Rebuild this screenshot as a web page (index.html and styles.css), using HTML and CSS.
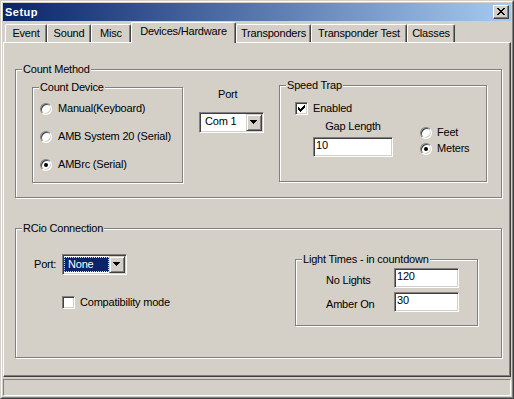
FILE: index.html
```html
<!DOCTYPE html>
<html lang="en">
<head>
    <meta charset="UTF-8">
    <title>Setup</title>
    <link rel="stylesheet" href="styles.css">
</head>
<body>
<div class="window">
    <div class="frame">
        <div class="titlebar">
            <span class="title">Setup</span>
            <div class="close-btn">
                <svg width="16" height="14" viewBox="0 0 16 14" shape-rendering="crispEdges">
                    <path d="M4 3h2v1h-2z M10 3h2v1h-2z M5 4h2v1h-2z M9 4h2v1h-2z M6 5h4v1h-4z M7 6h2v1h-2z M6 7h4v1h-4z M5 8h2v1h-2z M9 8h2v1h-2z M4 9h2v1h-2z M10 9h2v1h-2z" fill="#000"/>
                </svg>
            </div>
        </div>

        <div class="tabs">
            <div class="tab tab-event">Event</div>
            <div class="tab tab-sound">Sound</div>
            <div class="tab tab-misc">Misc</div>
            <div class="tab tab-devices active">Devices/Hardware</div>
            <div class="tab tab-transponders">Transponders</div>
            <div class="tab tab-test">Transponder Test</div>
            <div class="tab tab-classes">Classes</div>
        </div>

        <div class="panel">
            <!-- count method -->
            <div class="group count-method">
                <span class="group-title">Count Method</span>

                <div class="group count-device">
                    <span class="group-title">Count Device</span>
                    <div class="option"><span class="radio"></span>Manual(Keyboard)</div>
                    <div class="option"><span class="radio"></span>AMB System 20 (Serial)</div>
                    <div class="option"><span class="radio on"></span>AMBrc (Serial)</div>
                </div>

                <div class="port-col">
                    <div class="port-label">Port</div>
                    <div class="combo">
                        <div class="combo-value">Com 1</div>
                        <div class="combo-btn">
                            <svg width="8" height="5" viewBox="0 0 8 5" shape-rendering="crispEdges"><path d="M0 0h7v1h-1v1h-1v1h-1v1h-1v-1h-1v-1h-1v-1h-1z" fill="#000"/></svg>
                        </div>
                    </div>
                </div>

                <div class="group speed-trap">
                    <span class="group-title">Speed Trap</span>
                    <div class="option">
                        <span class="check">
                            <svg width="7" height="7" viewBox="0 0 7 7" shape-rendering="crispEdges"><path d="M0 2h1v3h-1z M1 3h1v3h-1z M2 4h1v3h-1z M3 3h1v3h-1z M4 2h1v3h-1z M5 1h1v3h-1z M6 0h1v3h-1z" fill="#000"/></svg>
                        </span>Enabled
                    </div>
                    <div class="gap-row">
                        <div class="gap-col">
                            <div class="gap-label">Gap Length</div>
                            <div class="field gap-field">10</div>
                        </div>
                        <div class="unit-col">
                            <div class="option"><span class="radio"></span>Feet</div>
                            <div class="option"><span class="radio on"></span>Meters</div>
                        </div>
                    </div>
                </div>
            </div>

            <!-- rcio -->
            <div class="group rcio">
                <span class="group-title">RCio Connection</span>

                <div class="rcio-left">
                    <div class="port-row">
                        <span class="port-row-label">Port:</span>
                        <div class="combo">
                            <div class="combo-value selected">None</div>
                            <div class="combo-btn">
                                <svg width="8" height="5" viewBox="0 0 8 5" shape-rendering="crispEdges"><path d="M0 0h7v1h-1v1h-1v1h-1v1h-1v-1h-1v-1h-1v-1h-1z" fill="#000"/></svg>
                            </div>
                        </div>
                    </div>
                    <div class="option compat"><span class="check"></span>Compatibility mode</div>
                </div>

                <div class="group light-times">
                    <span class="group-title">Light Times - in countdown</span>
                    <div class="light-row">
                        <span class="light-label">No Lights</span>
                        <div class="field light-field">120</div>
                    </div>
                    <div class="light-row">
                        <span class="light-label">Amber On</span>
                        <div class="field light-field">30</div>
                    </div>
                </div>
            </div>
        </div>

        <div class="statusbar"></div>
    </div>
</div>
</body>
</html>
```

FILE: styles.css
```css
*{
    margin: 0;
    padding: 0;
    box-sizing: border-box;
}
body{
    background-color: #d4d0c8;
    font-family: "Liberation Sans", Arial, sans-serif;
    font-size: 11px;
    line-height: 13px;
    letter-spacing: -0.2px;
    color: #000;
}

/* window frame */
.window{
    width: 514px;
    height: 399px;
    border: 1px solid;
    border-color: #d4d0c8 #404040 #404040 #d4d0c8;
}
.frame{
    height: 100%;
    border: 1px solid;
    border-color: #fff #808080 #808080 #fff;
    padding: 1px;
    display: flex;
    flex-direction: column;
}
.titlebar{
    height: 18px;
    flex-shrink: 0;
    display: flex;
    justify-content: space-between;
    align-items: flex-start;
    padding: 2px 2px 0 2px;
    background: linear-gradient(to right, #0a246a, #a6caf0);
}
.title{
    color: #fff;
    font-weight: bold;
    letter-spacing: 0.5px;
    line-height: 14px;
}
.close-btn{
    width: 16px;
    height: 14px;
    background-color: #d4d0c8;
    border: 1px solid;
    border-color: #fff #404040 #404040 #fff;
    box-shadow: inset -1px -1px 0 #808080;
}
.close-btn svg{
    display: block;
    margin: -1px;
}

/* tabs */
.tabs{
    display: flex;
    align-items: flex-end;
    height: 20px;
    flex-shrink: 0;
    margin-top: 1px;
    padding-left: 2px;
}
.tab{
    height: 18px;
    padding-top: 2px;
    text-align: center;
    white-space: nowrap;
    border: 1px solid #fff;
    border-bottom: none;
    border-right-color: #404040;
    border-radius: 2px 2px 0 0;
    box-shadow: inset -1px 0 0 #808080;
}
.tab.active{
    position: relative;
    z-index: 1;
    height: 21px;
    margin-bottom: -1px;
    background-color: #d4d0c8;
}
.tab-event{ width: 42px; }
.tab-sound{ width: 44px; }
.tab-misc{ width: 40px; }
.tab-devices{ width: 105px; }
.tab-transponders{ width: 75px; }
.tab-test{ width: 96px; }
.tab-classes{ width: 48px; }

.panel{
    position: relative;
    height: 335px;
    flex-shrink: 0;
    padding: 26px 0 0 11px;
    border: 1px solid;
    border-color: #fff #404040 #404040 #fff;
    box-shadow: inset -1px -1px 0 #808080;
}
.statusbar{
    height: 17px;
    flex-shrink: 0;
    margin-top: 2px;
    border: 1px solid;
    border-color: #808080 #fff #fff #808080;
}

/* group boxes */
.group{
    position: relative;
    border: 1px solid #808080;
    box-shadow: 1px 1px 0 #fff, inset 1px 1px 0 #fff;
}
.group-title{
    position: absolute;
    top: -7px;
    left: 6px;
    padding: 0 1px;
    background-color: #d4d0c8;
    white-space: nowrap;
}

/* controls */
.option{
    display: flex;
    align-items: center;
    height: 13px;
    white-space: nowrap;
}
.radio{
    position: relative;
    flex-shrink: 0;
    width: 12px;
    height: 12px;
    margin-right: 6px;
    border-radius: 50%;
    border: 1px solid;
    border-color: #808080 #fff #fff #808080;
    box-shadow: inset 1px 1px 0 #404040, inset -1px -1px 0 #d4d0c8;
    background-color: #fff;
}
.radio.on::after{
    content: "";
    position: absolute;
    left: 3px;
    top: 3px;
    width: 4px;
    height: 4px;
    border-radius: 50%;
    background-color: #000;
}
.check{
    flex-shrink: 0;
    width: 13px;
    height: 13px;
    margin-right: 5px;
    border: 1px solid;
    border-color: #808080 #fff #fff #808080;
    box-shadow: inset 1px 1px 0 #404040, inset -1px -1px 0 #d4d0c8;
    background-color: #fff;
}
.check svg{
    display: block;
    margin: 2px;
}
.field{
    height: 20px;
    padding: 1px 0 0 2px;
    background-color: #fff;
    border: 1px solid;
    border-color: #808080 #fff #fff #808080;
    box-shadow: inset 1px 1px 0 #404040, inset -1px -1px 0 #d4d0c8;
}
.combo{
    display: flex;
    width: 65px;
    height: 21px;
    padding: 1px;
    background-color: #fff;
    border: 1px solid;
    border-color: #808080 #fff #fff #808080;
    box-shadow: inset 1px 1px 0 #404040, inset -1px -1px 0 #d4d0c8;
}
.combo-value{
    flex: 1;
    padding: 1px 0 0 4px;
    white-space: nowrap;
}
.combo-value.selected{
    margin: 1px 0;
    padding: 0 0 0 3px;
    color: #fff;
    background-color: #0a246a;
    border: 1px dotted #f5db95;
}
.combo-btn{
    width: 16px;
    height: 17px;
    display: flex;
    align-items: center;
    justify-content: center;
    background-color: #d4d0c8;
    border: 1px solid;
    border-color: #d4d0c8 #404040 #404040 #d4d0c8;
    box-shadow: inset 1px 1px 0 #fff, inset -1px -1px 0 #808080;
}
.combo-btn svg{
    display: block;
}

/* count method */
.count-method{
    width: 487px;
    height: 129px;
    display: flex;
    align-items: flex-start;
    padding-left: 16px;
}
.count-device{
    width: 151px;
    height: 96px;
    margin-top: 17px;
    padding: 14px 0 0 7px;
    display: flex;
    flex-direction: column;
    gap: 15px;
}
.port-col{
    width: 65px;
    margin: 18px 0 0 16px;
}
.port-label{
    padding-left: 19px;
}
.port-col .combo{
    margin-top: 11px;
}
.speed-trap{
    width: 208px;
    height: 97px;
    margin: 15px 0 0 15px;
    padding: 16px 0 0 15px;
}
.gap-row{
    display: flex;
    margin: 5px 0 0 18px;
}
.gap-col{
    width: 80px;
}
.gap-label{
    text-align: center;
}
.gap-field{
    margin-top: 4px;
}
.unit-col{
    display: flex;
    flex-direction: column;
    gap: 3px;
    margin: 6px 0 0 27px;
}
.unit-col .radio{
    margin-right: 5px;
}

/* rcio */
.rcio{
    width: 487px;
    height: 130px;
    margin-top: 30px;
    display: flex;
    align-items: flex-start;
}
.rcio-left{
    padding: 25px 0 0 18px;
}
.port-row{
    display: flex;
    align-items: center;
}
.port-row-label{
    width: 28px;
}
.compat{
    margin: 21px 0 0 28px;
}
.compat .check{
    margin-right: 5px;
}
.light-times{
    width: 183px;
    height: 67px;
    margin: 30px 23px 0 auto;
    padding: 8px 0 0 30px;
    display: flex;
    flex-direction: column;
    gap: 4px;
}
.light-row{
    display: flex;
}
.light-label{
    width: 68px;
    padding-top: 6px;
}
.light-field{
    width: 65px;
}
```
